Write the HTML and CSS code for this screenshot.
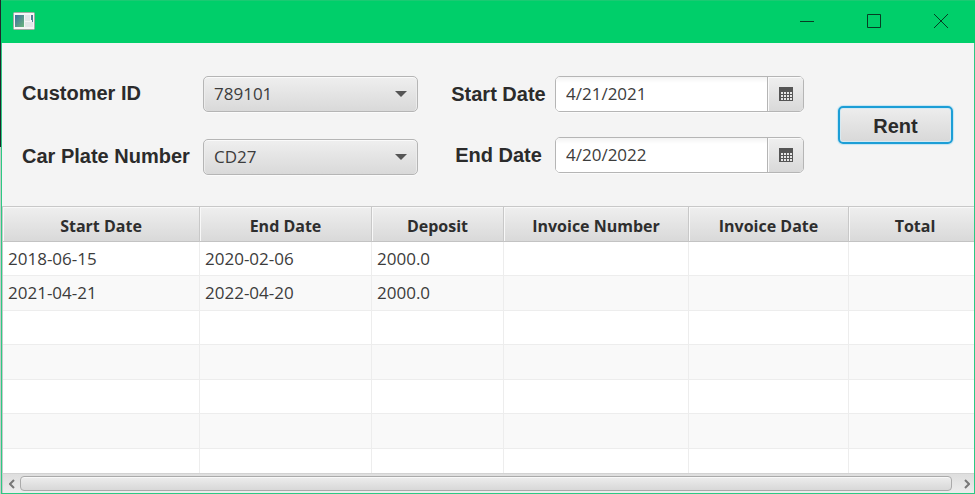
FILE: index.html
```html
<!DOCTYPE html>
<html lang="en">
<head>
<meta charset="utf-8">
<title>Car Rental</title>
<link rel="stylesheet" href="styles.css">
</head>
<body>
<svg class="symbols" aria-hidden="true">
  <symbol id="calendar" viewBox="0 0 14 14">
    <path fill="#555" d="M0 0h14v14H0z"/>
    <path stroke="#e6e6e6" stroke-width="2" stroke-dasharray="2 1" d="M2 6h11M2 9h11M2 12h11"/>
  </symbol>
</svg>
<div class="window">
  <header class="titlebar">
    <svg class="app-icon" viewBox="0 0 22 18" aria-hidden="true">
      <defs>
        <linearGradient id="pane" x1="0" y1="0" x2="1" y2="1">
          <stop offset="0" stop-color="#3d6fa0"/><stop offset="1" stop-color="#6cb57c"/>
        </linearGradient>
      </defs>
      <rect x=".5" y=".5" width="21" height="17" rx="1" fill="#f5f5f5" stroke="#a3a8a6"/>
      <rect x="2" y="3" width="9" height="12" fill="url(#pane)"/>
      <path fill="#e2e6e8" d="M12 3h5v6h-5zM12 10h8v5h-8z"/>
      <path fill="#497d96" d="M18 3h2v7h-1V8h-1z"/>
    </svg>
    <div class="window-buttons">
      <button type="button" aria-label="Minimize"><svg viewBox="0 0 16 16"><path d="M1 8.500h14"/></svg></button>
      <button type="button" aria-label="Maximize"><svg viewBox="0 0 16 16"><path d="M1.500 1.500h13v13h-13z"/></svg></button>
      <button type="button" aria-label="Close"><svg viewBox="0 0 16 16"><path d="M1 1l14 14M15 1L1 15"/></svg></button>
    </div>
  </header>

  <form class="rental-form">
    <div class="fields fields-car">
      <label for="customer">Customer ID</label>
      <div class="combo">
        <select id="customer"><option>789101</option></select>
        <svg viewBox="0 0 12 6" aria-hidden="true"><path d="M0 0h12L6 6z"/></svg>
      </div>
      <label for="plate">Car Plate Number</label>
      <div class="combo">
        <select id="plate"><option>CD27</option></select>
        <svg viewBox="0 0 12 6" aria-hidden="true"><path d="M0 0h12L6 6z"/></svg>
      </div>
    </div>
    <div class="fields fields-dates">
      <label for="start">Start Date</label>
      <div class="datepicker">
        <input id="start" type="text" value="4/21/2021">
        <button type="button" aria-label="Choose start date"><svg><use href="#calendar"/></svg></button>
      </div>
      <label for="end">End Date</label>
      <div class="datepicker">
        <input id="end" type="text" value="4/20/2022">
        <button type="button" aria-label="Choose end date"><svg><use href="#calendar"/></svg></button>
      </div>
    </div>
    <button class="rent" type="button">Rent</button>
  </form>

  <div class="table-view">
    <table>
      <colgroup><col class="c-start"><col class="c-end"><col class="c-deposit"><col class="c-number"><col class="c-date"><col></colgroup>
      <thead>
        <tr><th>Start Date</th><th>End Date</th><th>Deposit</th><th>Invoice Number</th><th>Invoice Date</th><th>Total</th></tr>
      </thead>
      <tbody>
        <tr><td>2018-06-15</td><td>2020-02-06</td><td>2000.0</td><td></td><td></td><td></td></tr>
        <tr><td>2021-04-21</td><td>2022-04-20</td><td>2000.0</td><td></td><td></td><td></td></tr>
        <tr><td></td><td></td><td></td><td></td><td></td><td></td></tr>
        <tr><td></td><td></td><td></td><td></td><td></td><td></td></tr>
        <tr><td></td><td></td><td></td><td></td><td></td><td></td></tr>
        <tr><td></td><td></td><td></td><td></td><td></td><td></td></tr>
        <tr><td></td><td></td><td></td><td></td><td></td><td></td></tr>
      </tbody>
    </table>
  </div>
  <div class="scrollbar">
    <button type="button" aria-label="Scroll left"><svg viewBox="0 0 6 10"><path d="M5 1L1 5l4 4"/></svg></button>
    <div class="thumb"></div>
    <button class="scroll-right" type="button" aria-label="Scroll right"><svg viewBox="0 0 6 10"><path d="M1 1l4 4-4 4"/></svg></button>
  </div>
</div>
</body>
</html>
```
FILE: styles.css
```css
* { box-sizing: border-box; }

body {
  margin: 0;
  height: 100vh;
  padding: 0 0 0 1px;
  background: linear-gradient(#20262a 147px, #c4cdc8 147px);
  color: #3c3c3c;
  font: 17px/24px "Open Sans", "Noto Sans", sans-serif;
}

button, input, select {
  margin: 0;
  font: inherit;
  color: inherit;
}

button {
  display: flex;
  align-items: center;
  justify-content: center;
  padding: 0;
  border: 0;
  background: none;
}

.symbols { display: none; }

.window {
  display: flex;
  flex-direction: column;
  height: 100%;
  border: 1px solid #2cc983;
  border-top: 0;
  background: #f4f4f4;
}

.titlebar {
  display: flex;
  flex: none;
  align-items: center;
  justify-content: space-between;
  height: 43px;
  margin: 0 -1px;
  padding: 0 1px 2px 12px;
  border-top: 1px solid #1bca72;
  background: #00cf6a;
}

.app-icon { width: 22px; height: 18px; }

.window-buttons { display: flex; }
.window-buttons button { width: 67px; height: 40px; }
.window-buttons svg {
  width: 16px;
  height: 16px;
  fill: none;
  stroke: #073d23;
  stroke-width: 1;
}

.rental-form {
  display: flex;
  flex: none;
  align-items: flex-start;
  height: 163px;
  padding: 33px 21px 0 20px;
}

.fields { display: grid; align-items: center; }
.fields label, .rent {
  font: bold 20px/24px "Liberation Sans", Arial, sans-serif;
  color: #2b2b2b;
  white-space: nowrap;
}
.fields-car {
  flex: 396 1 396px;
  grid-template-columns: 181px 1fr;
  row-gap: 27px;
}
.fields-car label { padding-bottom: 2px; }
.fields-dates {
  flex: 353 1 353px;
  grid-template-columns: 95px 1fr;
  column-gap: 9px;
  row-gap: 25px;
  margin-left: 33px;
}
.fields-dates label { text-align: center; }

.combo {
  display: grid;
  align-items: center;
}
.combo select, .combo svg { grid-area: 1 / 1; }
.combo select {
  appearance: none;
  width: 100%;
  height: 36px;
  padding: 0 10px;
  border: 1px solid #b5b5b5;
  border-radius: 5px;
  background: linear-gradient(#efefef, #d9d9d9);
  box-shadow: inset 0 1px #fafafa, inset 1px 0 #ececec, inset -1px 0 #ececec, 0 1px #fbfbfb;
}
.combo svg {
  justify-self: end;
  width: 12px;
  height: 6px;
  margin-right: 11px;
  fill: #555;
  pointer-events: none;
}

.datepicker {
  display: flex;
  height: 36px;
  border: 1px solid #b5b5b5;
  border-radius: 5px;
  background: #fff;
  box-shadow: 0 1px #fbfbfb;
  overflow: hidden;
}
.datepicker input {
  flex: 1;
  min-width: 0;
  padding: 0 10px;
  border: 0;
  background: linear-gradient(#f3f3f3, #fff 6px);
}
.datepicker button {
  width: 36px;
  border-left: 1px solid #b5b5b5;
  background: linear-gradient(#efefef, #d9d9d9);
  box-shadow: inset 1px 1px #fafafa;
}
.datepicker svg { width: 14px; height: 14px; }

.rent {
  flex: 115 1 115px;
  height: 38px;
  margin: 30px 0 0 34px;
  padding-top: 2px;
  border: 2px solid #1c9ed6;
  border-radius: 5px;
  background: linear-gradient(#ededed, #d8d8d8);
  box-shadow: 0 0 1px 1px #c5e5f3, inset 0 0 0 1px #d5e9f2;
}

.table-view {
  flex: 1;
  min-height: 0;
  border: solid #c8c8c8;
  border-width: 1px 0 0 1px;
  background: #fff;
  overflow: hidden;
}

table {
  width: calc(100% + 8px);
  table-layout: fixed;
  border-collapse: separate;
  border-spacing: 0;
}
.c-start { width: 197px; }
.c-end { width: 172px; }
.c-deposit { width: 132px; }
.c-number { width: 185px; }
.c-date { width: 160px; }

th, td { padding: 0 5px; white-space: nowrap; }
th {
  height: 35px;
  padding-top: 3px;
  border-right: 1px solid #c8c8c8;
  border-bottom: 1px solid #c3c3c3;
  background: linear-gradient(#efefef, #d9d9d9);
  box-shadow: inset 1px 1px #f8f8f8;
  color: #2e2e2e;
  font-size: 16px;
  font-weight: bold;
}
td {
  height: 34px;
  border-right: 1px solid #ededed;
  border-bottom: 1px solid #ededed;
}
tbody tr:nth-child(even) td { height: 35px; background: #f9f9f9; }

.scrollbar {
  display: flex;
  flex: none;
  align-items: center;
  height: 20px;
  border-top: 1px solid #d2d2d2;
  border-left: 1px solid #c8c8c8;
  background: linear-gradient(#dedede, #ececec);
}
.scrollbar button { width: 17px; height: 18px; }
.scrollbar svg {
  width: 6px;
  height: 10px;
  fill: none;
  stroke: #777;
  stroke-width: 2;
}
.thumb {
  flex: 1;
  height: 15px;
  border: 1px solid #aaa;
  border-radius: 4px;
  background: linear-gradient(#ededed, #d8d8d8);
  box-shadow: inset 0 1px #f8f8f8;
}
.scrollbar .scroll-right { width: 22px; padding-left: 8px; }
```
